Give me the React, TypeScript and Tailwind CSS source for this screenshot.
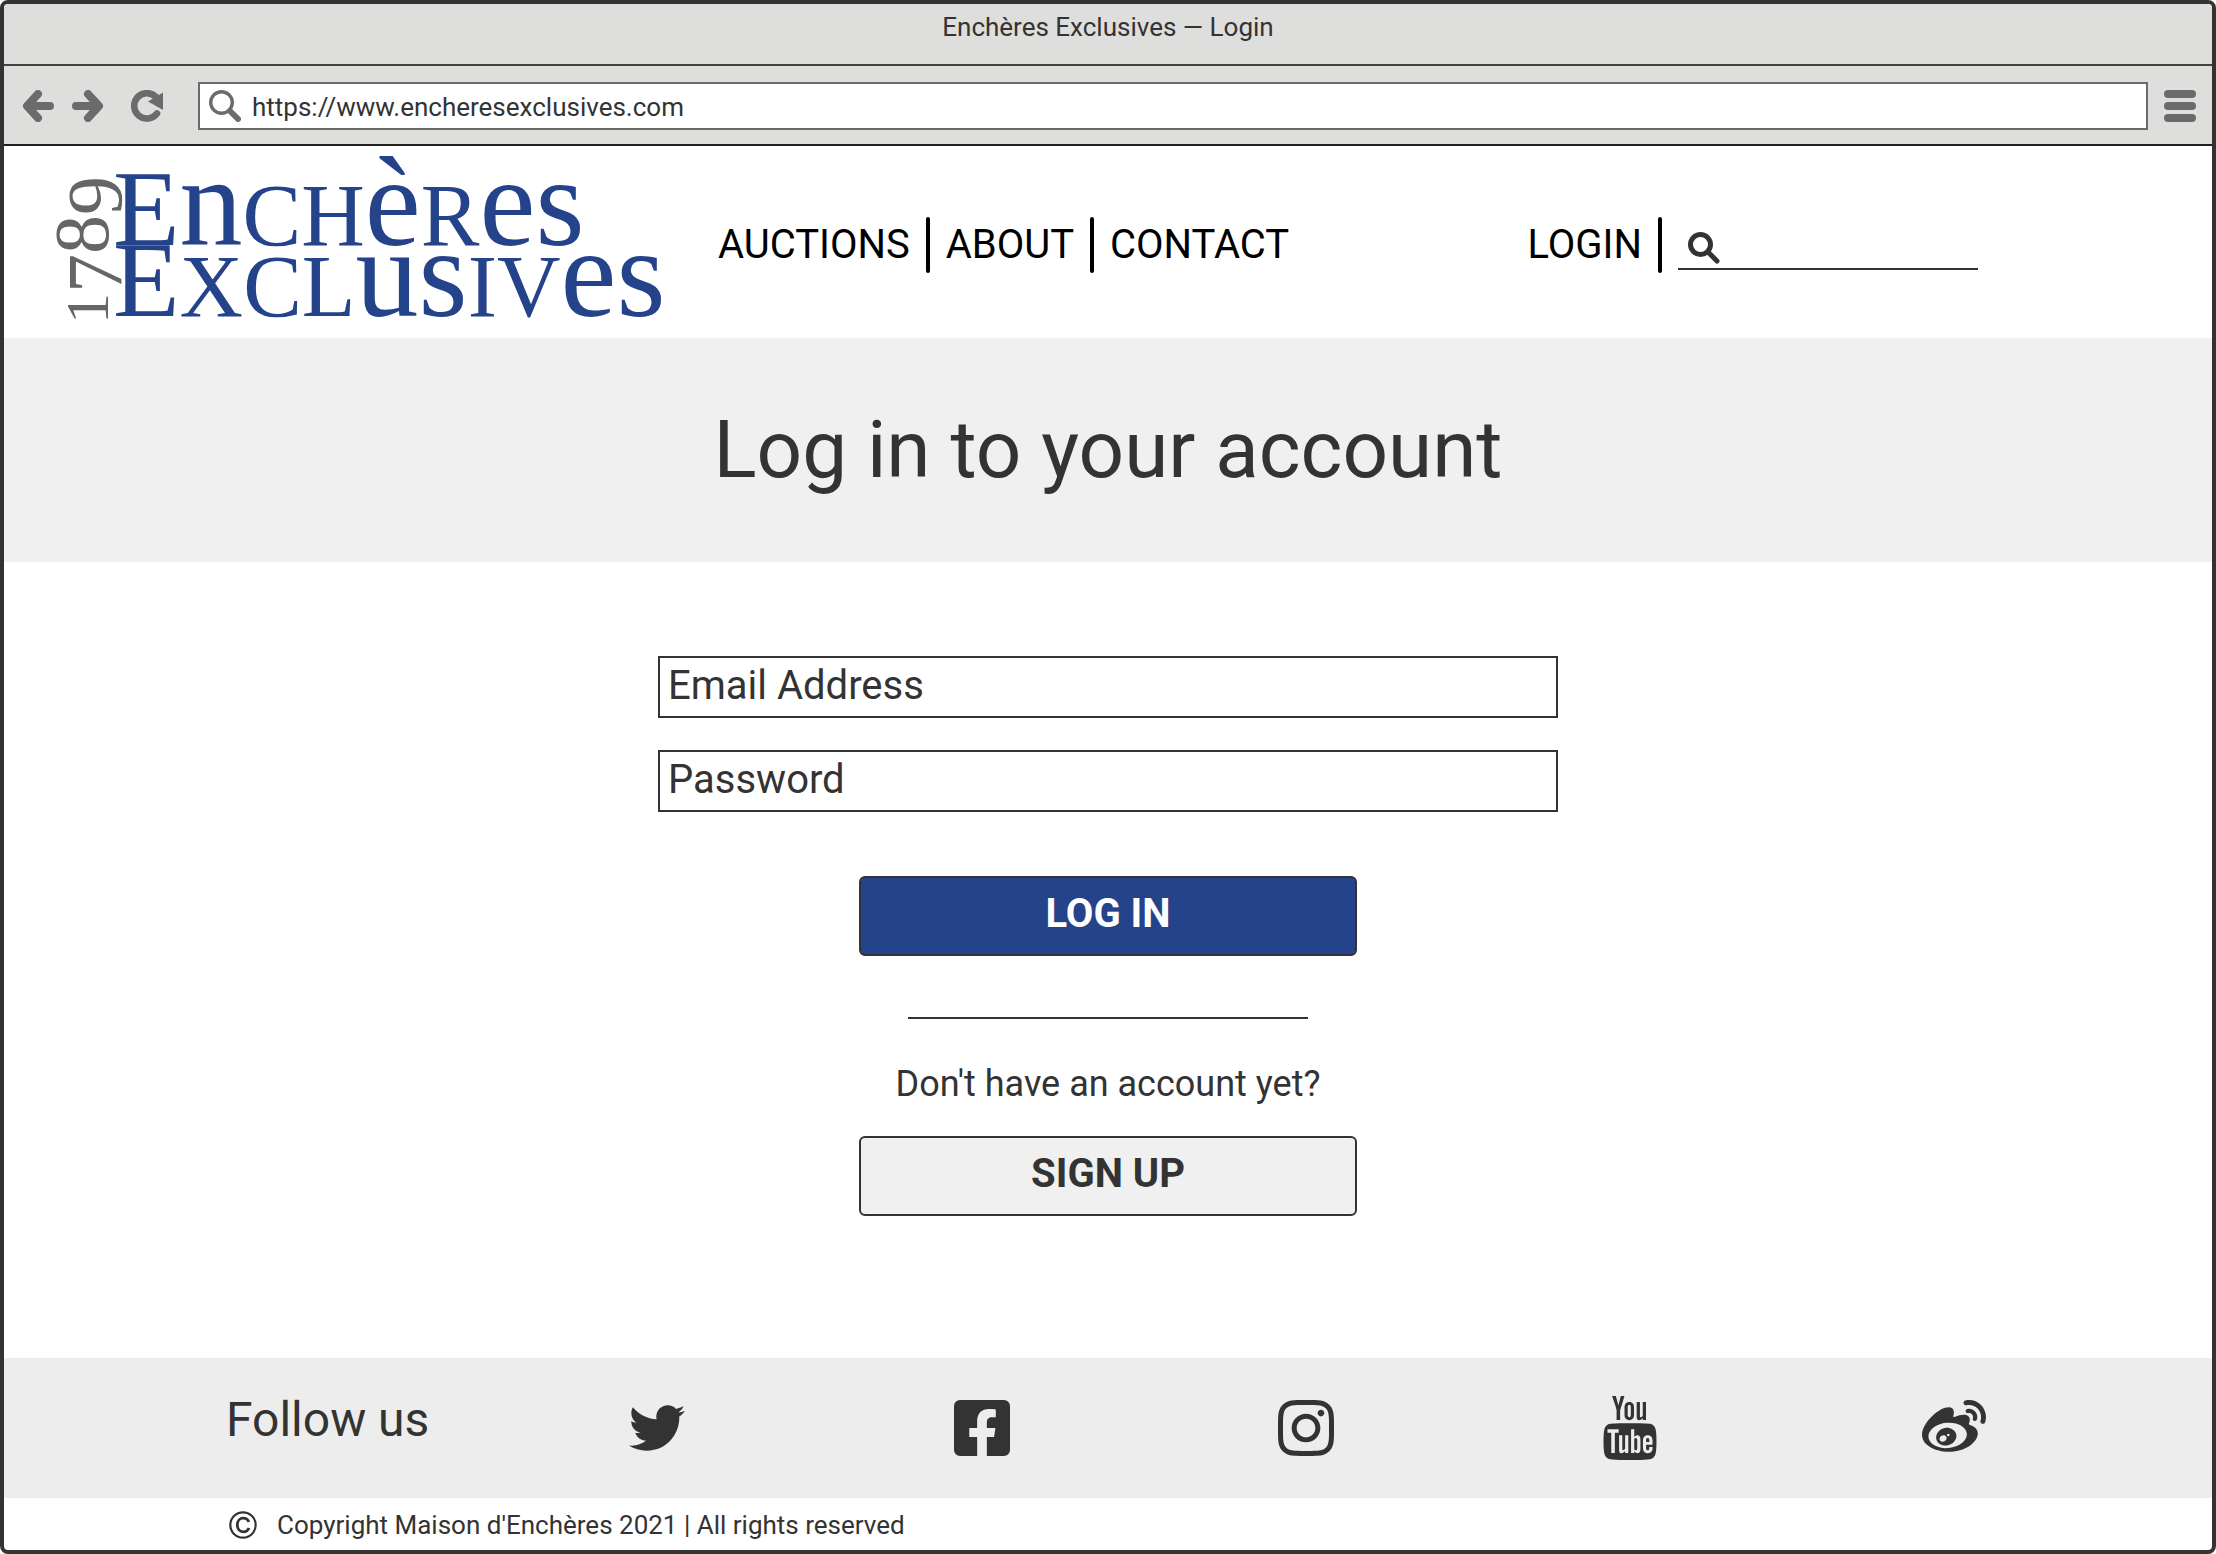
import React from "react";
import { FaFacebookSquare, FaInstagram, FaTwitter, FaWeibo } from "react-icons/fa";
import { TfiYoutube } from "react-icons/tfi";

function ArrowIcon({ flipped = false }: { flipped?: boolean }) {
  return (
    <svg viewBox="0 0 32 32" className={flipped ? "h-8 w-8 rotate-180" : "h-8 w-8"} fill="none" stroke="currentColor" strokeWidth="8" strokeLinecap="round" strokeLinejoin="round" aria-hidden="true">
      <path d="M16 4 5 16l11 12M6 16h22" />
    </svg>
  );
}

function ReloadIcon() {
  return (
    <svg viewBox="0 0 32 32" className="h-8 w-8" aria-hidden="true">
      <path d="M26 23.5A12.7 12.7 0 1 1 24.5 6.5" fill="none" stroke="currentColor" strokeWidth="6.6" strokeLinecap="round" />
      <path d="M17 11.5 32 2.5V20Z" fill="currentColor" />
    </svg>
  );
}

function Magnifier({ className, ring, handle }: { className: string; ring: number; handle: number }) {
  return (
    <svg viewBox="0 0 32 32" className={className} fill="none" stroke="currentColor" strokeLinecap="round" aria-hidden="true">
      <circle cx="12.5" cy="12.5" r={12.5 - ring / 2} strokeWidth={ring} />
      <path d="M21 21l8 8" strokeWidth={handle} />
    </svg>
  );
}

function CopyrightIcon() {
  return (
    <svg viewBox="0 0 28 28" className="h-7 w-7" fill="none" stroke="currentColor" aria-hidden="true">
      <circle cx="14" cy="14" r="12.7" strokeWidth="2.2" />
      <path d="M19.8 11C19 8.5 17 7.2 14.3 7.2c-3.7 0-6 2.8-6 6.8s2.3 6.8 6 6.8c2.9 0 4.8-1.4 5.6-4" strokeWidth="2.8" />
    </svg>
  );
}

function Logo() {
  return (
    <svg viewBox="0 0 630 192" className="block h-48 w-[630px] shrink-0 overflow-visible" fontFamily="'Liberation Serif', serif" role="img" aria-label="1789 Enchères Exclusives">
      <text transform="translate(63 178) rotate(-90)" fill="#666666" fontSize="78">
        <tspan fontSize="62">1</tspan>
        <tspan dy="13">7</tspan>
        <tspan dy="-13">8</tspan>
        <tspan dy="13">9</tspan>
      </text>
      <g fill="#24438b">
        <text x="68" y="99" fontSize="88">
          <tspan fontSize="109">E</tspan>
          <tspan fontSize="126">n</tspan>CH<tspan fontSize="126">è</tspan>R<tspan fontSize="126">es</tspan>
        </text>
        <text x="68" y="170" fontSize="88">
          <tspan fontSize="109">E</tspan>XCL<tspan fontSize="126">us</tspan>IV<tspan fontSize="126">es</tspan>
        </text>
      </g>
    </svg>
  );
}

function Divider() {
  return <span className="h-14 w-1 rounded-sm bg-black" aria-hidden="true" />;
}

const socials = [
  { name: "Twitter", Icon: FaTwitter, size: "h-14 w-14" },
  { name: "Facebook", Icon: FaFacebookSquare, size: "h-16 w-14" },
  { name: "Instagram", Icon: FaInstagram, size: "h-16 w-14" },
  { name: "YouTube", Icon: TfiYoutube, size: "h-16 w-16" },
  { name: "Weibo", Icon: FaWeibo, size: "h-16 w-16" },
];

const field =
  "h-[62px] w-full border-2 border-[#333333] bg-white px-2 pb-1 text-[40px] text-[#333333] outline-none placeholder:text-[#333333] placeholder:opacity-100";

export default function App() {
  return (
    <div className="flex min-h-screen flex-col overflow-hidden rounded-lg border-4 border-[#333333] bg-white font-[Roboto,sans-serif] text-[#333333]">
      <header className="border-b-2 border-[#231f20] bg-[#dededc]">
        <div className="flex h-[62px] items-center justify-center border-b-2 border-[#444444] pb-3.5 text-[26px]">
          Enchères Exclusives — Login
        </div>
        <div className="flex h-[78px] items-center pt-0.5 pr-4 pl-[18px] text-[#6b6b6b]">
          <button type="button" aria-label="Back">
            <ArrowIcon />
          </button>
          <button type="button" aria-label="Forward" className="ml-[18px]">
            <ArrowIcon flipped />
          </button>
          <button type="button" aria-label="Reload" className="ml-[27px]">
            <ReloadIcon />
          </button>
          <div className="ml-[35px] flex h-12 flex-1 items-center border-2 border-[#6b6b6b] bg-white pl-[9px]">
            <Magnifier className="h-8 w-8 shrink-0" ring={3.4} handle={6} />
            <input aria-label="Address" defaultValue="https://www.encheresexclusives.com" className="ml-[11px] h-full flex-1 pt-0.5 text-[26px] text-[#333333] outline-none" />
          </div>
          <button type="button" aria-label="Menu" className="ml-4 flex w-8 flex-col gap-1">
            <span className="h-2 rounded-full bg-[#6b6b6b]" />
            <span className="h-2 rounded-full bg-[#6b6b6b]" />
            <span className="h-2 rounded-full bg-[#6b6b6b]" />
          </button>
        </div>
      </header>

      <div className="flex h-48 items-center pr-[234px] pl-[41px] text-[40px] text-black">
        <a href="#home">
          <Logo />
        </a>
        <nav className="mt-1.5 ml-[43px] flex items-center gap-4">
          <a href="#auctions">AUCTIONS</a>
          <Divider />
          <a href="#about">ABOUT</a>
          <Divider />
          <a href="#contact">CONTACT</a>
        </nav>
        <div className="mt-1.5 ml-auto flex items-center gap-4">
          <a href="#login">LOGIN</a>
          <Divider />
          <div className="flex h-[50px] w-[300px] items-end gap-2 border-b-2 border-[#333333] pb-1 pl-[10px] text-[#333333]">
            <Magnifier className="h-8 w-8 shrink-0" ring={5} handle={5} />
            <input type="search" aria-label="Search" className="min-w-0 flex-1 text-[26px] outline-none" />
          </div>
        </div>
      </div>

      <div className="flex h-56 items-center justify-center bg-[#f0f0f0]">
        <h1 className="text-[80px]">Log in to your account</h1>
      </div>

      <main className="flex flex-1 flex-col items-center pt-[94px]">
        <form className="flex w-[900px] flex-col items-center gap-8" onSubmit={(e) => e.preventDefault()}>
          <input type="email" aria-label="Email Address" placeholder="Email Address" className={field} />
          <input type="password" aria-label="Password" placeholder="Password" className={field} />
          <button type="submit" className="mt-8 h-20 w-[498px] rounded-md border-2 border-[#333333] bg-[#24438b] pb-1 text-[40px] font-bold text-white">
            LOG IN
          </button>
        </form>
        <hr className="mt-[61px] w-[400px] border-t-2 border-[#333333]" />
        <p className="mt-[38px] text-[36px]">Don't have an account yet?</p>
        <button type="button" className="mt-[25px] h-20 w-[498px] rounded-md border-2 border-[#333333] bg-[#f0f0f0] pb-1 text-[40px] font-bold">
          SIGN UP
        </button>
      </main>

      <footer>
        <div className="flex h-[140px] items-center bg-[#ededed] pr-[226px] pl-[222px]">
          <h2 className="pb-4 text-[48px]">Follow us</h2>
          <ul className="ml-[196px] flex flex-1 items-center justify-between">
            {socials.map(({ name, Icon, size }) => (
              <li key={name}>
                <a href={"#" + name.toLowerCase()} aria-label={name} className="flex w-16 justify-center">
                  <Icon className={size} />
                </a>
              </li>
            ))}
          </ul>
        </div>
        <p className="flex h-[52px] items-center gap-5 pt-0.5 pl-[225px] text-[26px]">
          <CopyrightIcon />
          Copyright Maison d'Enchères 2021 | All rights reserved
        </p>
      </footer>
    </div>
  );
}
